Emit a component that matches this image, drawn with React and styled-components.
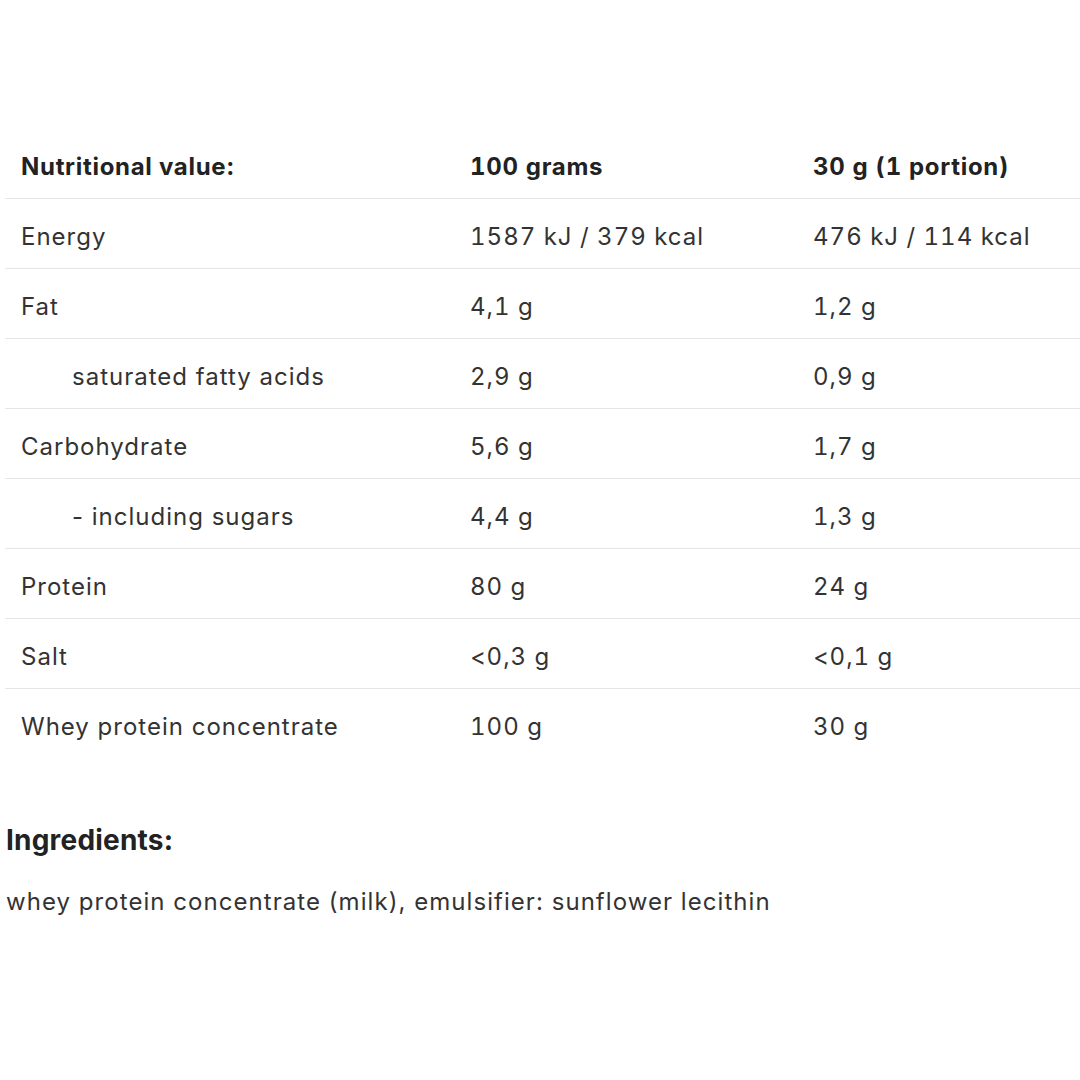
import React from 'react';
import styled, { createGlobalStyle } from 'styled-components';

const GlobalStyle = createGlobalStyle`
  html, body {
    margin: 0;
    padding: 0;
    background: #ffffff;
    overflow: hidden;
  }
  body {
    font-family: Inter, Roboto, "Liberation Sans", sans-serif;
    color: #333333;
  }
`;

const Page = styled.div`
  width: 1080px;
  height: 1080px;
  padding: 134px 0 0 5px;
  box-sizing: border-box;
`;

const Table = styled.table`
  width: 1075px;
  table-layout: fixed;
  border-collapse: collapse;
  font-size: 24px;
  letter-spacing: 1px;
`;

const Row = styled.tr`
  height: ${p => (p.$head ? '64px' : '70px')};
  border-bottom: ${p => (p.$last ? 'none' : '1.5px solid #e6e6e6')};
`;

const Cell = styled.td`
  box-sizing: border-box;
  padding: 6px 0 0 ${p => (p.$indent ? '67px' : '16px')};
  vertical-align: middle;
  white-space: nowrap;
  font-variant-numeric: ${p => (p.$numeric ? 'tabular-nums' : 'normal')};
`;

const HeadCell = styled.th`
  box-sizing: border-box;
  padding: 2px 0 0 16px;
  text-align: left;
  font-weight: 700;
  color: #222;
  letter-spacing: 0.7px;
  width: ${p => p.$width || 'auto'};
  white-space: nowrap;
  font-variant-numeric: ${p => (p.$numeric ? 'tabular-nums' : 'normal')};
`;

const Section = styled.section`
  padding: 66px 0 0 1px;
`;

const Heading = styled.h3`
  margin: 0;
  font-size: 28px;
  font-weight: 700;
  color: #222;
  line-height: 32px;
  letter-spacing: 0.2px;
`;

const Text = styled.p`
  margin: 30px 0 0;
  font-size: 24px;
  line-height: 32px;
  letter-spacing: 1.05px;
`;

const rows = [
  ['Energy', '1587 kJ / 379 kcal', '476 kJ / 114 kcal'],
  ['Fat', '4,1 g', '1,2 g'],
  ['saturated fatty acids', '2,9 g', '0,9 g', true],
  ['Carbohydrate', '5,6 g', '1,7 g'],
  ['- including sugars', '4,4 g', '1,3 g', true],
  ['Protein', '80 g', '24 g'],
  ['Salt', '<0,3 g', '<0,1 g'],
  ['Whey protein concentrate', '100 g', '30 g'],
];

export default function App() {
  return (
    <>
      <GlobalStyle />
      <Page>
        <Table>
          <thead>
            <Row $head>
              <HeadCell $width="449px">Nutritional value:</HeadCell>
              <HeadCell $width="343px" $numeric>100 grams</HeadCell>
              <HeadCell $numeric>30 g (1 portion)</HeadCell>
            </Row>
          </thead>
          <tbody>
            {rows.map(([name, full, portion, indent], i) => (
              <Row key={name} $last={i === rows.length - 1}>
                <Cell $indent={indent}>{name}</Cell>
                <Cell $numeric>{full}</Cell>
                <Cell $numeric>{portion}</Cell>
              </Row>
            ))}
          </tbody>
        </Table>
        <Section>
          <Heading>Ingredients:</Heading>
          <Text>whey protein concentrate (milk), emulsifier: sunflower lecithin</Text>
        </Section>
      </Page>
    </>
  );
}
